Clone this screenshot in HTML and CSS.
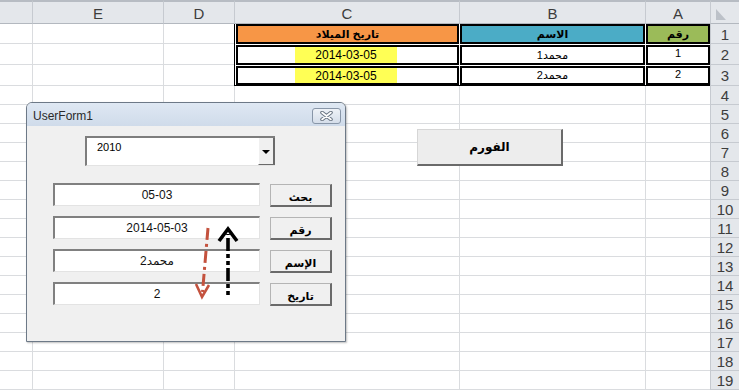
FILE: index.html
```html
<!DOCTYPE html>
<html lang="ar">
<head>
    <meta charset="UTF-8">
    <title>Sheet1 - UserForm1</title>
    <link rel="stylesheet" href="styles.css">
</head>
<body>
    <div class="page">
        <div class="sheet" id="sheet">
            <!-- Column headers (sheet is right-to-left, so A sits next to the row numbers) -->
            <div class="colhead edge"></div>
            <div class="colhead">E</div>
            <div class="colhead">D</div>
            <div class="colhead">C</div>
            <div class="colhead">B</div>
            <div class="colhead">A</div>
            <div class="corner"><span class="select-all"></span></div>

            <!-- Data range C1:A3 -->
            <div class="data-table">
                <div class="tcell head-date">تاريخ الميلاد</div>
                <div class="tcell head-name">الاسم</div>
                <div class="tcell head-num">رقم</div>

                <div class="tcell"><span class="date-fill">2014-03-05</span></div>
                <div class="tcell">محمد1</div>
                <div class="tcell num">1</div>

                <div class="tcell"><span class="date-fill">2014-03-05</span></div>
                <div class="tcell">محمد2</div>
                <div class="tcell num">2</div>
            </div>
        </div>

        <!-- Button placed on the sheet -->
        <div class="sheet-button">الفورم</div>

        <!-- VBA user form -->
        <div class="userform">
            <div class="titlebar">
                <span class="title">UserForm1</span>
                <span class="close">
                    <svg width="13" height="10" viewBox="0 0 13 10">
                        <path d="M2 1.5 L11 8.5 M11 1.5 L2 8.5" stroke="#6b7684" stroke-width="3.6" stroke-linecap="round"/>
                        <path d="M2 1.5 L11 8.5 M11 1.5 L2 8.5" stroke="#ffffff" stroke-width="1.6" stroke-linecap="round"/>
                    </svg>
                </span>
            </div>
            <div class="form-body">
                <div class="combo">
                    <span class="combo-value">2010</span>
                    <span class="combo-btn"><span class="caret"></span></span>
                </div>
                <div class="fields">
                    <div class="field">
                        <div class="textbox">05-03</div>
                        <div class="fbtn">بحث</div>
                    </div>
                    <div class="field">
                        <div class="textbox">2014-05-03</div>
                        <div class="fbtn">رقم</div>
                    </div>
                    <div class="field">
                        <div class="textbox">محمد2</div>
                        <div class="fbtn">الإسم</div>
                    </div>
                    <div class="field">
                        <div class="textbox">2</div>
                        <div class="fbtn">تاريخ</div>
                    </div>
                </div>
            </div>
        </div>

        <!-- Hand-drawn arrows over the form -->
        <svg class="arrows" width="50" height="85" viewBox="0 0 50 85">
            <line x1="18" y1="8" x2="12.5" y2="72" stroke="#c4523e" stroke-width="3" stroke-dasharray="12 4 3 4"/>
            <polyline points="6,64 12,77 19,65" fill="none" stroke="#c4523e" stroke-width="2.6"/>
            <line x1="38" y1="75" x2="38" y2="14" stroke="#000" stroke-width="3.6" stroke-dasharray="4 3 4 3 13 3"/>
            <polyline points="29,21 38,9 47,21" fill="none" stroke="#000" stroke-width="3.6"/>
        </svg>
    </div>

    <script>
      // Fill the empty rows 1 to 19 of the sheet
      const sheet = document.getElementById('sheet');

      for (let row = 1; row <= 19; row++) {
          // rows 1-3 only need the empty columns left of the data range
          const emptyCols = row <= 3 ? 3 : 6;
          for (let col = 0; col < emptyCols; col++) {
              const cell = document.createElement('div');
              cell.className = col === 0 ? 'cell edge' : 'cell';
              sheet.appendChild(cell);
          }
          const head = document.createElement('div');
          head.className = 'rowhead';
          head.innerText = row;
          sheet.appendChild(head);
      }
  </script>
</body>
</html>
```

FILE: styles.css
```css
/* Reset */
* {
    box-sizing: border-box;
}

body {
    margin: 0;
    padding: 0;
    background-color: #ffffff;
    font-family: "Liberation Sans", "DejaVu Sans", sans-serif;
    color: #000;
}

.page {
    position: relative;
    width: 739px;
    height: 391px;
    overflow: hidden;
}

/* Sheet grid */
.sheet {
    display: grid;
    grid-template-columns: 32px 131px 71px 225px 186px 65px 29px;
    grid-template-rows: 24px 20px 21px 21px;
    grid-auto-rows: 19px;
}

.cell {
    border-left: 1px solid #dadcdf;
    border-bottom: 1px solid #dadcdf;
}

.cell.edge {
    border-left: none;
}

.colhead {
    display: flex;
    align-items: center;
    justify-content: center;
    padding-top: 1px;
    background-color: #e4e7eb;
    border-top: 2px solid #b7bcc3;
    border-left: 1px solid #c6cad0;
    border-bottom: 1px solid #b3b8bf;
    font-size: 15px;
    color: #3d3d3d;
}

.colhead.edge {
    border-left: none;
}

.corner {
    display: flex;
    align-items: flex-end;
    padding: 0 0 3px 5px;
    background-color: #e4e7eb;
    border-top: 2px solid #b7bcc3;
    border-left: 1px solid #c6cad0;
    border-bottom: 1px solid #b3b8bf;
}

.select-all {
    width: 0;
    height: 0;
    border-bottom: 11px solid #bcc1c8;
    border-right: 10px solid transparent;
}

.rowhead {
    display: flex;
    align-items: center;
    justify-content: center;
    padding-top: 1px;
    background-color: #e4e7eb;
    border-left: 1px solid #c6cad0;
    border-bottom: 1px solid #c6cad0;
    font-size: 15px;
    color: #3d3d3d;
}

/* Data range */
.data-table {
    grid-column: 4 / 7;
    grid-row: 2 / 5;
    display: grid;
    grid-template-columns: 223px 185px 64px;
    grid-template-rows: 20px 20px 19px;
    gap: 1px;
    padding-left: 1px;
    background-color: #ffffff;
    border-left: 1px solid #000;
    border-bottom: 1px solid #000;
}

.tcell {
    display: flex;
    align-items: center;
    justify-content: center;
    border: 2px solid #000;
    background-color: #ffffff;
    font-size: 11px;
    overflow: hidden;
}

.tcell.num {
    align-items: flex-start;
    padding-top: 0;
    font-size: 11px;
}

.head-date,
.head-name,
.head-num {
    font-weight: bold;
    font-size: 11px;
}

.head-date {
    background-color: #f79646;
}

.head-name {
    background-color: #4bacc6;
}

.head-num {
    background-color: #9bbb59;
}

.date-fill {
    display: flex;
    align-items: center;
    height: 100%;
    padding: 0 20px;
    margin-left: -3px;
    background-color: #ffff55;
    font-size: 12px;
}

/* Form button on the sheet */
.sheet-button {
    position: absolute;
    left: 417px;
    top: 129px;
    width: 146px;
    height: 37px;
    display: flex;
    align-items: center;
    justify-content: center;
    background-color: #ededed;
    border-style: solid;
    border-width: 1px 2px 2px 1px;
    border-color: #d6d6d6 #6a6a6a #6a6a6a #d6d6d6;
    font-weight: bold;
    font-size: 12px;
}

/* User form window */
.userform {
    position: absolute;
    left: 26px;
    top: 102px;
    width: 320px;
    height: 240px;
    display: flex;
    flex-direction: column;
    background-color: #f0f0f0;
    border: 1px solid #6d7987;
    border-radius: 6px 6px 0 0;
    box-shadow: 1px 1px 2px rgba(0, 0, 0, 0.25);
}

.titlebar {
    display: flex;
    justify-content: space-between;
    align-items: flex-start;
    height: 23px;
    padding: 5px 4px 0 6px;
    background: linear-gradient(#dfe8f3, #cfdbea);
    border-radius: 5px 5px 0 0;
}

.title {
    margin-top: 1px;
    font-size: 12px;
    color: #2a2a2a;
}

.close {
    display: flex;
    align-items: center;
    justify-content: center;
    width: 29px;
    height: 16px;
    border: 1px solid #8896a8;
    border-radius: 3px;
    background: linear-gradient(#eef2f7, #d5deea);
}

.form-body {
    flex: 1;
    padding: 10px 0 0 26px;
}

.combo {
    display: flex;
    justify-content: space-between;
    width: 190px;
    height: 30px;
    margin-left: 32px;
    background-color: #ffffff;
    border-style: solid;
    border-width: 2px 0 1px 2px;
    border-color: #7d7d7d #ffffff #e3e3e3 #7d7d7d;
}

.combo-value {
    padding: 3px 0 0 10px;
    font-size: 11px;
}

.combo-btn {
    display: flex;
    align-items: center;
    justify-content: center;
    width: 17px;
    background-color: #f0f0f0;
    border-style: solid;
    border-width: 0 2px 1px 1px;
    border-color: #ffffff #6a6a6a #6a6a6a #ffffff;
}

.caret {
    width: 0;
    height: 0;
    margin-top: 1px;
    border-top: 4px solid #000;
    border-left: 4px solid transparent;
    border-right: 4px solid transparent;
}

.fields {
    display: flex;
    flex-direction: column;
    gap: 9px;
    margin-top: 17px;
}

.field {
    display: flex;
    gap: 10px;
}

.textbox {
    display: flex;
    align-items: center;
    justify-content: center;
    width: 207px;
    height: 23px;
    background-color: #ffffff;
    border-style: solid;
    border-width: 2px 1px 1px 2px;
    border-color: #808080 #e3e3e3 #e3e3e3 #808080;
    font-size: 12px;
    color: #111;
}

.fbtn {
    display: flex;
    align-items: flex-end;
    justify-content: center;
    width: 62px;
    height: 23px;
    margin-top: 1px;
    padding-bottom: 1px;
    background-color: #f0f0f0;
    border-style: solid;
    border-width: 1px 2px 2px 1px;
    border-color: #b4b4b4 #6a6a6a #6a6a6a #b4b4b4;
    font-weight: bold;
    font-size: 11px;
}

/* Arrows drawn over the form */
.arrows {
    position: absolute;
    left: 190px;
    top: 220px;
}
```
